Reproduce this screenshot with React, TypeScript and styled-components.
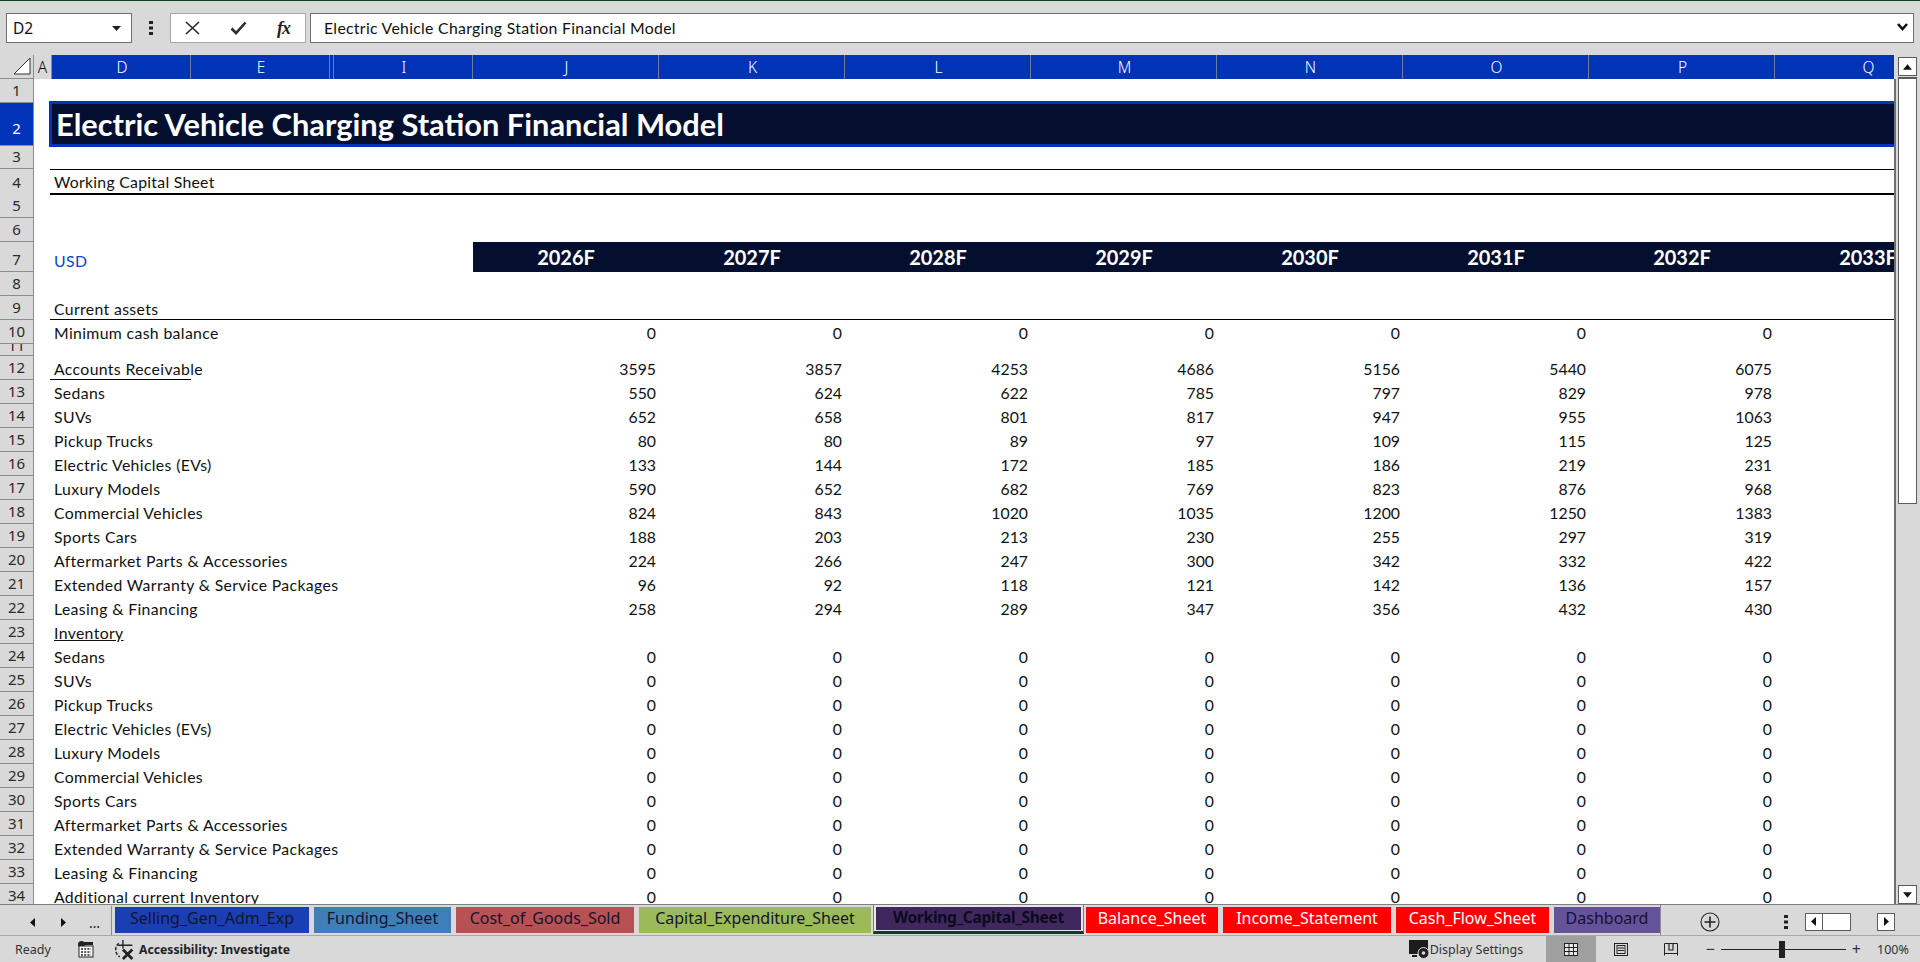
import React from 'react';
import styled, { createGlobalStyle } from 'styled-components';

const GRID_COLUMNS = '34px 18px 139px 139px 4px 139px repeat(8, 186px)';
const BLUE = '#0033b8';
const NAVY = '#040f30';
const CHROME = '#d9d9d9';
const CELL_FONT = 'Lato, "Liberation Sans", sans-serif';
const UI_FONT = '"Noto Sans", "Open Sans", sans-serif';

const GlobalStyle = createGlobalStyle`
  html, body {
    margin: 0;
    padding: 0;
    overflow: hidden;
    background: ${CHROME};
  }
  * {
    box-sizing: border-box;
  }
`;

const Window = styled.div`
  width: 1920px;
  height: 962px;
  display: flex;
  flex-direction: column;
  background: ${CHROME};
  border-top: 1px solid #0b3d22;
  overflow: hidden;
`;

/* formula bar */
const FormulaBar = styled.div`
  height: 54px;
  flex: none;
  display: flex;
  align-items: flex-start;
  padding: 12px 6px 0 6px;
`;

const NameBox = styled.div`
  width: 126px;
  height: 30px;
  background: #fff;
  border: 1px solid #6f6f6f;
  display: flex;
  align-items: center;
  justify-content: space-between;
  padding: 0 10px 0 6px;
  font: 15.5px ${UI_FONT};
  color: #111;
`;

const Grip = styled.div`
  width: 38px;
  height: 30px;
  display: flex;
  align-items: center;
  justify-content: center;
`;

const FormulaButtons = styled.div`
  width: 136px;
  height: 30px;
  background: #fff;
  border: 1px solid #a6a6a6;
  display: flex;
  align-items: center;
  justify-content: space-between;
  padding: 0 12px 0 14px;
`;

const FxGlyph = styled.span`
  font: italic 700 18px "Liberation Serif", serif;
  color: #222;
  letter-spacing: -1px;
  padding-right: 3px;
`;

const FormulaInput = styled.div`
  flex: 1;
  margin-left: 4px;
  height: 30px;
  background: #fff;
  border: 1px solid #6f6f6f;
  display: flex;
  align-items: center;
  justify-content: space-between;
  padding: 0 5px 2px 13px;
  font: 15.8px ${CELL_FONT};
  letter-spacing: 0.3px;
  color: #111;
`;

/* main sheet area */
const SheetArea = styled.div`
  flex: 1;
  min-height: 0;
  display: flex;
`;

const Sheet = styled.div`
  width: 1894px;
  flex: none;
  overflow: hidden;
  display: flex;
  flex-direction: column;
`;

const HeaderRow = styled.div`
  height: 24px;
  flex: none;
  display: grid;
  grid-template-columns: ${GRID_COLUMNS};
`;

const SelectAll = styled.div`
  background: ${CHROME};
  border-right: 1px solid #8c8c8c;
  border-bottom: 1px solid #8c8c8c;
  display: flex;
  align-items: flex-end;
  justify-content: flex-end;
  padding: 0 2px 3px 0;
`;

const ColHead = styled.div<{ $selected?: boolean }>`
  background: ${(p) => (p.$selected ? BLUE : CHROME)};
  color: ${(p) => (p.$selected ? '#fff' : '#111')};
  font: 300 15.5px ${UI_FONT};
  display: flex;
  align-items: center;
  justify-content: center;
  padding: 0 0 1px ${(p) => (p.$selected ? '2px' : '0')};
  border-right: 1px solid ${(p) => (p.$selected ? '#6f7a9c' : '#8c8c8c')};
  overflow: hidden;
`;

const Rows = styled.div`
  flex: 1;
  min-height: 0;
  background: #fff;
  overflow: hidden;
`;

const Row = styled.div<{ $height: number }>`
  height: ${(p) => p.$height}px;
  display: grid;
  grid-template-columns: ${GRID_COLUMNS};
  font: 15.8px/23px ${CELL_FONT};
  color: #111;
`;

const RowHead = styled.div<{ $selected?: boolean; $tiny?: boolean; $tall?: boolean }>`
  grid-column: 1;
  background: ${(p) => (p.$selected ? BLUE : CHROME)};
  color: ${(p) => (p.$selected ? '#fff' : '#2a2a2a')};
  border-right: 1px solid #8c8c8c;
  border-bottom: 1px solid #8c8c8c;
  font: 400 15px/${(p) => (p.$tiny ? '2px' : '23px')} ${UI_FONT};
  text-align: center;
  overflow: hidden;
  display: flex;
  justify-content: center;
  align-items: ${(p) => (p.$tiny ? 'flex-start' : 'flex-end')};
  padding-bottom: ${(p) => (p.$tall ? '5px' : '0')};
`;

const TitleBand = styled.div`
  grid-column: 3 / -1;
  margin: 1px 0 2px;
  background: ${NAVY};
  box-shadow: 0 0 0 3px ${BLUE};
  color: #fff;
  font: 700 30.8px/42px ${CELL_FONT};
  padding-left: 4px;
  white-space: nowrap;
  overflow: visible;
  height: 40px;
`;

const SheetSubtitle = styled.div`
  grid-column: 3 / -1;
  margin-left: -2px;
  padding-left: 4px;
  border-top: 1px solid #000;
  border-bottom: 2px solid #000;
  line-height: 23px;
  letter-spacing: 0.27px;
`;

const Label = styled.div<{ $blue?: boolean; $ul?: boolean }>`
  grid-column: 3 / 6;
  grid-row: 1;
  padding-left: 2px;
  white-space: nowrap;
  align-self: end;
  letter-spacing: 0.35px;
  color: ${(p) => (p.$blue ? '#0a45c4' : 'inherit')};
  text-decoration: ${(p) => (p.$ul ? 'underline' : 'none')};
`;

const RuleAcross = styled.div`
  grid-column: 3 / -1;
  grid-row: 1;
  margin-left: -2px;
  align-self: end;
  border-bottom: 1px solid #000;
  height: 1px;
`;

const RuleShort = styled.div`
  grid-column: 3;
  grid-row: 1;
  margin-left: -2px;
  align-self: end;
  border-bottom: 1px solid #000;
  height: 1px;
`;

const Num = styled.div<{ $col: number }>`
  grid-column: ${(p) => p.$col};
  grid-row: 1;
  text-align: right;
  padding-right: 3px;
  align-self: end;
`;

const YearBand = styled.div`
  grid-column: 7 / -1;
  grid-row: 1;
  height: 30px;
  background: ${NAVY};
  display: grid;
  grid-template-columns: repeat(8, 186px);
`;

const Year = styled.div`
  color: #fff;
  font: 700 20px/30px ${CELL_FONT};
  text-align: center;
`;

/* vertical scrollbar */
const VScroll = styled.div`
  flex: 1;
  border-left: 2px solid #6f6f6f;
  margin-top: 24px;
  background: ${CHROME};
  display: flex;
  flex-direction: column;
  padding-left: 2px;
`;

const VButton = styled.div`
  width: 19px;
  height: 19px;
  flex: none;
  background: #fff;
  border: 1px solid #5c5c5c;
  display: flex;
  align-items: center;
  justify-content: center;
`;

const VButtonUp = styled(VButton)`
  margin-top: -22px;
`;

const VThumb = styled.div`
  width: 19px;
  height: 427px;
  flex: none;
  margin-top: 1px;
  background: #fff;
  border: 1px solid #5c5c5c;
  border-top-width: 2px;
`;

const VSpacer = styled.div`
  flex: 1;
`;

/* sheet tabs */
const TabBar = styled.div`
  height: 32px;
  flex: none;
  display: flex;
  align-items: flex-start;
  border-top: 1px solid #7f7f7f;
  border-bottom: 1px solid #a8a8a8;
`;

const TabNav = styled.div`
  width: 112px;
  height: 29px;
  flex: none;
  display: flex;
  align-items: center;
  padding: 4px 0 0 29px;
  gap: 22px;
  font: 14px ${UI_FONT};
  color: #222;
  border-right: 1px solid #8c8c8c;
  margin-top: 1px;
`;

const TabList = styled.div`
  display: flex;
  align-items: flex-start;
  padding: 2px 0 0 3px;
  height: 30px;
`;

const Tab = styled.div<{ $bg: string; $fg?: string; $w: number }>`
  width: ${(p) => p.$w}px;
  height: 26px;
  background: ${(p) => p.$bg};
  color: ${(p) => p.$fg || '#14142e'};
  font: 16px/22px ${UI_FONT};
  text-align: center;
  white-space: nowrap;
  overflow: hidden;
  margin-right: 5px;
`;

const ActiveTab = styled.div`
  width: 211px;
  height: 29px;
  margin: -2px 2px 0 -3px;
  border: 1px solid #7f7f7f;
  border-top: none;
  border-bottom: 3px solid #0f3d25;
  background: #e6e6e6;
  padding: 2px 2px 0;
`;

const ActiveTabFill = styled.div`
  height: 23px;
  background: #40285f;
  color: #0b0b1d;
  font: 700 15.6px/21px ${UI_FONT};
  letter-spacing: -0.3px;
  text-align: center;
  white-space: nowrap;
`;

const TabTools = styled.div`
  flex: 1;
  height: 30px;
  display: flex;
  align-items: center;
  border-left: 1px solid #8c8c8c;
  padding-top: 3px;
  margin-left: -5px;
`;

const AddSheet = styled.div`
  margin-left: 39px;
  width: 20px;
  height: 20px;
  display: flex;
`;

const ToolsGrip = styled.div`
  margin-left: 64px;
  display: flex;
`;

const HBox = styled.div`
  width: 18px;
  height: 18px;
  background: #fff;
  border: 1px solid #5c5c5c;
  display: flex;
  align-items: center;
  justify-content: center;
`;

const HLeft = styled(HBox)`
  margin-left: 17px;
`;

const HThumb = styled(HBox)`
  width: 29px;
  margin-left: -1px;
`;

const HRight = styled(HBox)`
  margin-left: 26px;
`;

/* status bar */
const StatusBar = styled.div`
  height: 26px;
  flex: none;
  display: flex;
  align-items: center;
  font: 12.5px ${UI_FONT};
  color: #333;
`;

const Ready = styled.span`
  margin-left: 15px;
  width: 63px;
`;

const Accessibility = styled.span`
  margin-left: 2px;
  font-weight: 700;
  font-size: 12.2px;
  color: #222;
`;

const MacroSlot = styled.span`
  display: flex;
  width: 35px;
`;

const Spacer = styled.div`
  flex: 1;
`;

const DisplaySettings = styled.span`
  width: 116px;
  white-space: nowrap;
`;

const ViewButton = styled.div<{ $active?: boolean }>`
  width: 50px;
  height: 100%;
  display: flex;
  align-items: center;
  justify-content: center;
  background: ${(p) => (p.$active ? '#9f9f9f' : 'transparent')};
`;

const ZoomSign = styled.span`
  font: 16px/16px ${UI_FONT};
  color: #333;
`;

const ZoomTrack = styled.div`
  width: 125px;
  height: 1px;
  background: #222;
  margin: 0 6px;
  position: relative;
`;

const ZoomThumb = styled.div`
  position: absolute;
  left: 58px;
  top: -8px;
  width: 6px;
  height: 17px;
  background: #222;
`;

const ZoomGroup = styled.div`
  display: flex;
  align-items: center;
  margin-left: 10px;
`;

const ZoomValue = styled.span`
  margin-left: 16px;
  margin-right: 12px;
  width: 31px;
  white-space: nowrap;
`;

const ZERO = [0, 0, 0, 0, 0, 0, 0];

type DataRow = { n: number; label: string; values?: number[]; ul?: boolean; short?: boolean; across?: boolean };

const ASSETS: DataRow[] = [
  { n: 9, label: 'Current assets', across: true },
  { n: 10, label: 'Minimum cash balance', values: ZERO },
];

const BREAKDOWN: DataRow[] = [
  { n: 12, label: 'Accounts Receivable', values: [3595, 3857, 4253, 4686, 5156, 5440, 6075], short: true },
  { n: 13, label: 'Sedans', values: [550, 624, 622, 785, 797, 829, 978] },
  { n: 14, label: 'SUVs', values: [652, 658, 801, 817, 947, 955, 1063] },
  { n: 15, label: 'Pickup Trucks', values: [80, 80, 89, 97, 109, 115, 125] },
  { n: 16, label: 'Electric Vehicles (EVs)', values: [133, 144, 172, 185, 186, 219, 231] },
  { n: 17, label: 'Luxury Models', values: [590, 652, 682, 769, 823, 876, 968] },
  { n: 18, label: 'Commercial Vehicles', values: [824, 843, 1020, 1035, 1200, 1250, 1383] },
  { n: 19, label: 'Sports Cars', values: [188, 203, 213, 230, 255, 297, 319] },
  { n: 20, label: 'Aftermarket Parts & Accessories', values: [224, 266, 247, 300, 342, 332, 422] },
  { n: 21, label: 'Extended Warranty & Service Packages', values: [96, 92, 118, 121, 142, 136, 157] },
  { n: 22, label: 'Leasing & Financing', values: [258, 294, 289, 347, 356, 432, 430] },
  { n: 23, label: 'Inventory', ul: true },
  { n: 24, label: 'Sedans', values: ZERO },
  { n: 25, label: 'SUVs', values: ZERO },
  { n: 26, label: 'Pickup Trucks', values: ZERO },
  { n: 27, label: 'Electric Vehicles (EVs)', values: ZERO },
  { n: 28, label: 'Luxury Models', values: ZERO },
  { n: 29, label: 'Commercial Vehicles', values: ZERO },
  { n: 30, label: 'Sports Cars', values: ZERO },
  { n: 31, label: 'Aftermarket Parts & Accessories', values: ZERO },
  { n: 32, label: 'Extended Warranty & Service Packages', values: ZERO },
  { n: 33, label: 'Leasing & Financing', values: ZERO },
  { n: 34, label: 'Additional current Inventory', values: ZERO },
];

const COLUMNS: { name: string; selected?: boolean }[] = [
  { name: 'A' },
  { name: 'D', selected: true },
  { name: 'E', selected: true },
  { name: '', selected: true },
  { name: 'I', selected: true },
  { name: 'J', selected: true },
  { name: 'K', selected: true },
  { name: 'L', selected: true },
  { name: 'M', selected: true },
  { name: 'N', selected: true },
  { name: 'O', selected: true },
  { name: 'P', selected: true },
  { name: 'Q', selected: true },
];

const YEARS = ['2026F', '2027F', '2028F', '2029F', '2030F', '2031F', '2032F', '2033F'];

const Triangle = ({ dir, size = 8 }: { dir: 'up' | 'down' | 'left' | 'right'; size?: number }) => {
  const pts = {
    up: '0,7 8,7 4,2',
    down: '0,2 8,2 4,7',
    left: '6,0 6,9 1,4.5',
    right: '2,0 2,9 7,4.5',
  }[dir];
  return (
    <svg width={size} height={size + 1} viewBox="0 0 8 9">
      <polygon points={pts} fill="#111" />
    </svg>
  );
};

const DataLine: React.FC<{ row: DataRow }> = ({ row }) => (
  <Row $height={24}>
    <RowHead>{row.n}</RowHead>
    {row.across && <RuleAcross />}
    {row.short && <RuleShort />}
    <Label $ul={row.ul}>{row.label}</Label>
    {row.values?.map((v, i) => (
      <Num key={i} $col={7 + i}>{v}</Num>
    ))}
  </Row>
);

export default function App() {
  return (
    <Window>
      <GlobalStyle />
      <FormulaBar>
        <NameBox>
          D2
          <svg width="9" height="5" viewBox="0 0 9 5"><polygon points="0,0 9,0 4.5,5" fill="#222" /></svg>
        </NameBox>
        <Grip>
          <svg width="4" height="14" viewBox="0 0 4 14" fill="#222">
            <rect x="0" y="0" width="4" height="3" />
            <rect x="0" y="5.5" width="4" height="3" />
            <rect x="0" y="11" width="4" height="3" />
          </svg>
        </Grip>
        <FormulaButtons>
          <svg width="15" height="14" viewBox="0 0 15 14" stroke="#2b2b2b" strokeWidth="1.7" fill="none">
            <path d="M1 1 L14 13 M14 1 L1 13" />
          </svg>
          <svg width="17" height="14" viewBox="0 0 17 14" stroke="#2b2b2b" strokeWidth="2.6" fill="none">
            <path d="M1.5 7.5 L6 12 L15.5 1.5" />
          </svg>
          <FxGlyph>fx</FxGlyph>
        </FormulaButtons>
        <FormulaInput>
          Electric Vehicle Charging Station Financial Model
          <svg width="11" height="8" viewBox="0 0 11 8" fill="none" stroke="#111" strokeWidth="2.6">
            <path d="M1 1 L5.5 6 L10 1" />
          </svg>
        </FormulaInput>
      </FormulaBar>

      <SheetArea>
        <Sheet>
          <HeaderRow>
            <SelectAll>
              <svg width="18" height="18" viewBox="0 0 18 18">
                <polygon points="17,1 17,17 1,17" fill="#fff" stroke="#333" strokeWidth="1" />
              </svg>
            </SelectAll>
            {COLUMNS.map((c, i) => (
              <ColHead key={i} $selected={c.selected}>{c.name}</ColHead>
            ))}
          </HeaderRow>
          <Rows>
            <Row $height={24}><RowHead>1</RowHead></Row>
            <Row $height={43}>
              <RowHead $selected $tall>2</RowHead>
              <TitleBand>Electric Vehicle Charging Station Financial Model</TitleBand>
            </Row>
            <Row $height={23}><RowHead>3</RowHead></Row>
            <Row $height={25}>
              <RowHead>4</RowHead>
              <SheetSubtitle>Working Capital Sheet</SheetSubtitle>
            </Row>
            <Row $height={24}><RowHead>5</RowHead></Row>
            <Row $height={24}><RowHead>6</RowHead></Row>
            <Row $height={30}>
              <RowHead>7</RowHead>
              <Label $blue>USD</Label>
              <YearBand>
                {YEARS.map((y) => <Year key={y}>{y}</Year>)}
              </YearBand>
            </Row>
            <Row $height={24}><RowHead>8</RowHead></Row>
            {ASSETS.map((r) => <DataLine key={r.n} row={r} />)}
            <Row $height={12}><RowHead $tiny>11</RowHead></Row>
            {BREAKDOWN.map((r) => <DataLine key={r.n} row={r} />)}
          </Rows>
        </Sheet>
        <VScroll>
          <VButtonUp><Triangle dir="up" size={9} /></VButtonUp>
          <VThumb />
          <VSpacer />
          <VButton><Triangle dir="down" size={9} /></VButton>
        </VScroll>
      </SheetArea>

      <TabBar>
        <TabNav>
          <Triangle dir="left" />
          <Triangle dir="right" />
          <span>…</span>
        </TabNav>
        <TabList>
          <Tab $bg="#1a3fb4" $w={194}>Selling_Gen_Adm_Exp</Tab>
          <Tab $bg="#3f7fb8" $w={137}>Funding_Sheet</Tab>
          <Tab $bg="#b85153" $w={178}>Cost_of_Goods_Sold</Tab>
          <Tab $bg="#9bbb59" $w={232}>Capital_Expenditure_Sheet</Tab>
          <ActiveTab><ActiveTabFill>Working_Capital_Sheet</ActiveTabFill></ActiveTab>
          <Tab $bg="#ff0000" $fg="#fff" $w={132}>Balance_Sheet</Tab>
          <Tab $bg="#ff0000" $fg="#fff" $w={168}>Income_Statement</Tab>
          <Tab $bg="#ff0000" $fg="#fff" $w={153}>Cash_Flow_Sheet</Tab>
          <Tab $bg="#64529b" $w={106}>Dashboard</Tab>
        </TabList>
        <TabTools>
          <AddSheet>
            <svg width="20" height="20" viewBox="0 0 20 20" fill="none" stroke="#222">
              <circle cx="10" cy="10" r="9" strokeWidth="1.1" />
              <path d="M10 4.5 V15.5 M4.5 10 H15.5" strokeWidth="1.6" />
            </svg>
          </AddSheet>
          <ToolsGrip>
            <svg width="4" height="14" viewBox="0 0 4 14" fill="#222">
              <rect x="0" y="0" width="4" height="3" />
              <rect x="0" y="5.5" width="4" height="3" />
              <rect x="0" y="11" width="4" height="3" />
            </svg>
          </ToolsGrip>
          <HLeft><Triangle dir="left" /></HLeft>
          <HThumb />
          <HRight><Triangle dir="right" /></HRight>
        </TabTools>
      </TabBar>

      <StatusBar>
        <Ready>Ready</Ready>
        <MacroSlot>
          <svg width="16" height="17" viewBox="0 0 16 17">
            <circle cx="3.5" cy="3.5" r="3.5" fill="#222" />
            <rect x="6" y="1" width="9" height="3" fill="#222" />
            <rect x="1" y="5" width="14" height="11" fill="#fff" stroke="#222" />
            <path d="M3 8 H13 M3 11 H13 M3 14 H13" stroke="#222" strokeWidth="1.4" strokeDasharray="2 1.2" />
          </svg>
        </MacroSlot>
        <svg width="24" height="21" viewBox="0 0 22 20" fill="none" stroke="#222">
          <path d="M5 4 A8 8 0 0 0 6 17" strokeWidth="1.4" strokeDasharray="3 1.5" />
          <path d="M9 1 V9 M4 6 H18" strokeWidth="1.3" />
          <path d="M9 10 L18 19 M18 10 L9 19" strokeWidth="2.6" />
        </svg>
        <Accessibility>Accessibility: Investigate</Accessibility>
        <Spacer />
        <svg width="21" height="23" viewBox="0 0 21 23">
          <rect x="0" y="2" width="19" height="14" fill="#1c1c1c" />
          <rect x="3" y="17" width="5" height="2" fill="#1c1c1c" />
          <circle cx="14.5" cy="15" r="5.5" fill="#222" stroke="#d9d9d9" />
          <circle cx="14.5" cy="15" r="1.8" fill="#d9d9d9" />
        </svg>
        <DisplaySettings>Display Settings</DisplaySettings>
        <ViewButton $active>
          <svg width="14" height="13" viewBox="0 0 14 13" fill="#e8e8e8" stroke="#222">
            <rect x="0.5" y="0.5" width="13" height="12" />
            <path d="M0.5 4.5 H13.5 M0.5 8.5 H13.5 M5 0.5 V12.5 M9.5 0.5 V12.5" fill="none" />
          </svg>
        </ViewButton>
        <ViewButton>
          <svg width="14" height="13" viewBox="0 0 14 13" fill="none" stroke="#222">
            <rect x="0.5" y="0.5" width="13" height="12" />
            <rect x="3" y="2.5" width="8" height="8" />
            <path d="M4 5 H10 M4 7.5 H10" />
          </svg>
        </ViewButton>
        <ViewButton>
          <svg width="14" height="13" viewBox="0 0 14 13" fill="none" stroke="#222">
            <path d="M0.5 12.5 V0.5 H13.5 V12.5" />
            <path d="M0.5 10.5 H13.5 M5 0.5 V7 H9 V0.5" strokeWidth="1.2" />
          </svg>
        </ViewButton>
        <ZoomGroup>
          <ZoomSign>−</ZoomSign>
          <ZoomTrack><ZoomThumb /></ZoomTrack>
          <ZoomSign>+</ZoomSign>
        </ZoomGroup>
        <ZoomValue>100%</ZoomValue>
      </StatusBar>
    </Window>
  );
}
